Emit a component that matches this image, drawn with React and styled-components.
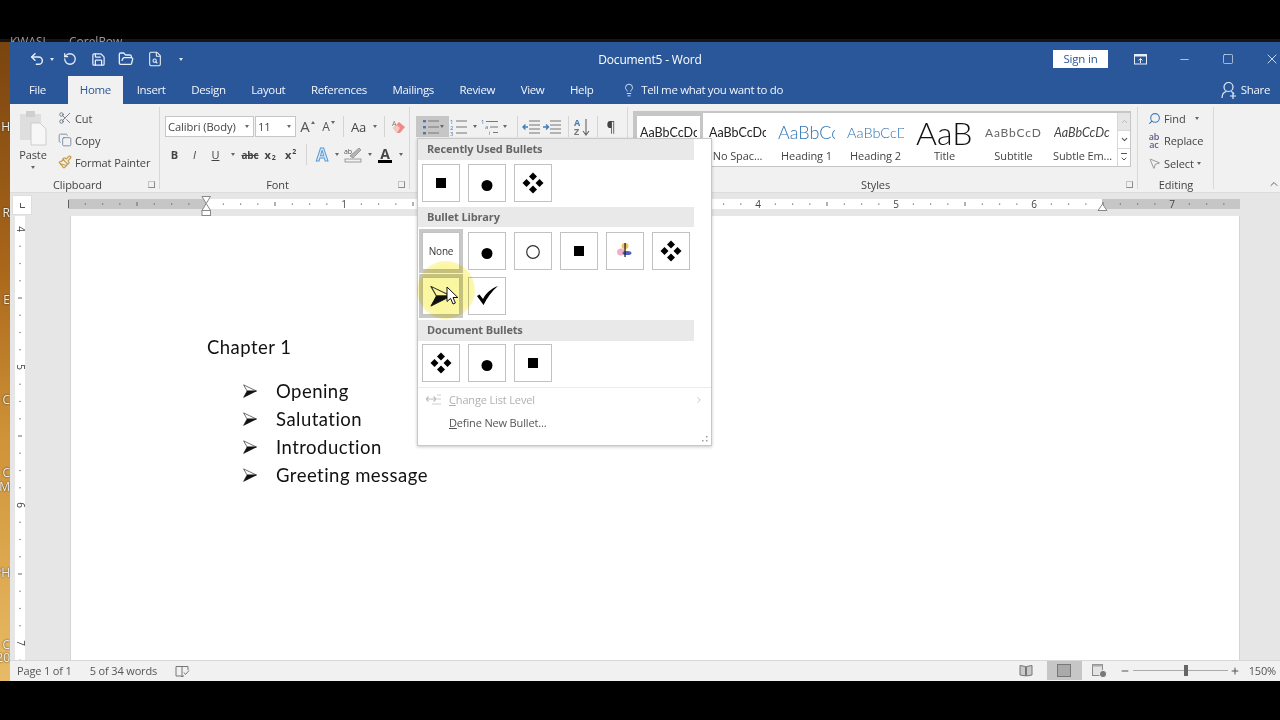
import React from 'react'
import styled, { createGlobalStyle } from 'styled-components'
import {
  Undo2, RotateCcw, Save, FolderOpen, FileSearch, Lightbulb, Minus, Square, X, Scissors, Copy,
  Paintbrush, Search, MousePointer2, Plus, ChevronUp, ChevronDown, ChevronRight,
} from 'lucide-react'

const UI = '"Open Sans", "Noto Sans", sans-serif'
const RANGE = (n) => Array.from({ length: n }, (_, i) => i)

const Global = createGlobalStyle`
  html, body { margin: 0; padding: 0; background: #000; }
  #root { width: 1280px; height: 720px; overflow: hidden; }
`

const Screen = styled.div`
  position: relative;
  width: 1280px;
  height: 720px;
  background: #000;
  font-family: ${UI};
  display: flex;
  flex-direction: column;
  filter: blur(0.5px);
`
const TopStrip = styled.div`
  height: 42px;
  flex: none;
  overflow: hidden;
  display: flex;
  align-items: flex-end;
  gap: 23px;
  padding-left: 10px;
  color: #9a9a9a;
  font-size: 12px;
  line-height: 12px;
  background: linear-gradient(180deg, #000 0 39px, #161616 39px);
  & > span { margin-bottom: -6px; }
`
const Middle = styled.div`
  height: 639px;
  flex: none;
  display: flex;
`
const Desktop = styled.div`
  position: relative;
  width: 10px;
  flex: none;
  overflow: hidden;
  background: linear-gradient(180deg, #7a4410 0%, #a9661a 35%, #cf9338 62%, #e8bb66 100%);
`
const DesktopLabel = styled.span`
  position: absolute;
  right: 0;
  top: ${(p) => p.$top}px;
  color: #f2efe8;
  font-size: 12px;
  line-height: 14px;
  text-shadow: 0 0 2px #222;
`
const Window = styled.div`
  flex: 1;
  display: flex;
  flex-direction: column;
  min-width: 0;
  overflow: hidden;
  background: #f1f1f1;
`

/* title bar */
const TitleBar = styled.div`
  height: 34px;
  flex: none;
  background: #2a579a;
  color: #fff;
  display: flex;
  align-items: center;
  position: relative;
  box-sizing: border-box;
`
const Quick = styled.div`
  display: flex;
  align-items: center;
  padding-left: 17px;
  color: #e6eef8;
`
const QuickBtn = styled.div`
  width: ${(p) => p.$w}px;
  display: flex;
  align-items: center;
  justify-content: center;
  flex: none;
`
const WhiteCaret = styled.i`
  width: 0;
  height: 0;
  border-left: 2.5px solid transparent;
  border-right: 2.5px solid transparent;
  border-top: 3px solid #dfe8f5;
`
const DocTitle = styled.div`
  position: absolute;
  left: 0;
  right: 0;
  top: 0;
  bottom: 0;
  display: flex;
  align-items: center;
  justify-content: center;
  font-size: 12px;
  letter-spacing: -0.15px;
  transform: translateX(5px);
  pointer-events: none;
`
const WinControls = styled.div`
  margin-left: auto;
  margin-right: -14px;
  display: flex;
  align-items: center;
  position: relative;
`
const SignIn = styled.div`
  width: 55px;
  height: 18px;
  background: #fff;
  color: #2a579a;
  font-size: 11.5px;
  letter-spacing: -0.2px;
  line-height: 18px;
  text-align: center;
  margin-right: 10px;
`
const WinBtn = styled.div`
  width: 44px;
  display: flex;
  justify-content: center;
  align-items: center;
  color: #e6eef8;
`

/* tabs */
const TabBar = styled.div`
  height: 28px;
  flex: none;
  background: #2a579a;
  display: flex;
  align-items: stretch;
  font-size: 11.5px;
  letter-spacing: -0.35px;
  color: #f2f5fa;
`
const Tab = styled.div`
  display: flex;
  align-items: center;
  padding: 0 12.8px 1px;
  ${(p) => p.$active && 'background: #f1f1f1; color: #2a579a; margin: 0 1px 0 13px; padding: 0 12px 1px;'}
  ${(p) => p.$first && 'padding: 0 9px 1px 19px;'}
`
const TellMe = styled.div`
  display: flex;
  align-items: center;
  gap: 5px;
  padding: 0 0 1px 16px;
`
const Share = styled.div`
  margin-left: auto;
  display: flex;
  align-items: center;
  gap: 4px;
  padding: 0 10px 1px 0;
`

/* ribbon */
const Ribbon = styled.div`
  height: 89px;
  flex: none;
  display: flex;
  background: #f1f1f1;
  border-bottom: 1px solid #dcdcdc;
  box-sizing: border-box;
  color: #444;
  font-size: 11px;
  letter-spacing: -0.1px;
`
const Group = styled.div`
  width: ${(p) => p.$w}px;
  flex: none;
  box-sizing: border-box;
  display: flex;
  flex-direction: column;
  position: relative;
  &::after {
    content: '';
    position: absolute;
    right: 0;
    top: 3px;
    bottom: 3px;
    width: 1px;
    background: #d8d8d8;
  }
`
const GroupBody = styled.div`
  flex: 1;
  min-height: 0;
  display: flex;
  padding-left: ${(p) => p.$pl || 0}px;
`
const GroupLabel = styled.div`
  height: 18px;
  margin-bottom: -1px;
  display: grid;
  grid-template-columns: 1fr auto 1fr;
  align-items: center;
  padding-right: ${(p) => (p.$center ? 0 : 15)}px;
  font-size: 11px;
  color: #444;
  & > span { grid-column: 2; }
`
const Launcher = styled.i`
  grid-column: 3;
  justify-self: end;
  margin-right: -10px;
  width: 5px;
  height: 5px;
  border: 1px solid #8a8a8a;
  border-top-color: #c4c4c4;
  border-left-color: #c4c4c4;
  display: block;
`

const PasteCol = styled.div`
  width: 46px;
  display: flex;
  flex-direction: column;
  align-items: center;
  padding-top: 6px;
  flex: none;
`
const PasteLabel = styled.div`
  margin: 1px 0 4px;
  font-size: 11px;
  line-height: 15px;
`
const ClipList = styled.div`
  display: flex;
  flex-direction: column;
  padding: 3px 0 0 2px;
`
const ClipItem = styled.div`
  height: 22px;
  display: flex;
  align-items: center;
  gap: 3px;
  white-space: nowrap;
`

const Rows = styled.div`
  display: flex;
  flex-direction: column;
  gap: 7px;
  padding-top: 12px;
`
const Row = styled.div`
  display: flex;
  align-items: center;
  height: 21px;
`
const Combo = styled.div`
  width: ${(p) => p.$w}px;
  height: 21px;
  box-sizing: border-box;
  margin-right: 1px;
  background: #fff;
  border: 1px solid #c6c6c6;
  display: flex;
  align-items: center;
  justify-content: space-between;
  padding: 0 4px 0 2px;
  font-size: 11.2px;
`
const Cell = styled.div`
  width: ${(p) => p.$w}px;
  height: 21px;
  flex: none;
  display: flex;
  align-items: center;
  justify-content: center;
  position: relative;
  color: #444;
  font-size: ${(p) => p.$size || 11}px;
  font-weight: ${(p) => (p.$bold ? 700 : 400)};
  font-style: ${(p) => (p.$italic ? 'italic' : 'normal')};
  ${(p) => p.$under && 'text-decoration: underline;'}
  ${(p) => p.$strike && 'text-decoration: line-through;'}
  ${(p) => p.$on && 'background: #c6c6c6;'}
`
const Caret = styled.i`
  width: 0;
  height: 0;
  border-left: 2.5px solid transparent;
  border-right: 2.5px solid transparent;
  border-top: 3px solid #666;
  display: block;
  flex: none;
`
const Nudge = styled.i`
  width: 0;
  height: 0;
  margin: -8px 0 0 1px;
  border-left: 2px solid transparent;
  border-right: 2px solid transparent;
  ${(p) => (p.$up ? 'border-bottom: 3px solid #666;' : 'border-top: 3px solid #666;')}
`
const VLine = styled.i`
  width: 1px;
  height: 21px;
  flex: none;
  background: #d4d4d4;
  margin: 0 ${(p) => p.$r}px 0 ${(p) => p.$l}px;
`
const Sup = styled.span`
  font-size: 7px;
  position: relative;
  top: ${(p) => p.$top}px;
  margin-left: 1px;
`
const BigA = styled.span`
  font-size: ${(p) => p.$size}px;
  color: #555;
  line-height: 1;
`
const GlowA = styled.span`
  font-size: 17px;
  font-weight: 700;
  line-height: 1;
  color: #dce9f8;
  -webkit-text-stroke: 1px #5b9bd5;
`
const ColorA = styled.span`
  font-size: 14px;
  font-weight: 700;
  line-height: 13px;
  color: #444;
  border-bottom: 3px solid #000;
  padding: 0 2px;
`

/* styles gallery */
const Gallery = styled.div`
  display: flex;
  margin: 7px 0 0 5px;
  height: 56px;
  width: 498px;
  box-sizing: border-box;
  background: #fff;
  border: 1px solid #c6c6c6;
  border-top-width: 2px;
`
const StyleItem = styled.div`
  width: 69px;
  flex: none;
  box-sizing: border-box;
  display: flex;
  flex-direction: column;
  align-items: center;
  ${(p) => p.$on && 'box-shadow: inset 0 0 0 3px #c6c6c6;'}
`
const Preview = styled.div`
  height: 35px;
  width: 57px;
  box-sizing: border-box;
  padding-top: 3px;
  overflow: hidden;
  display: flex;
  align-items: center;
  white-space: nowrap;
  font-family: Lato, sans-serif;
  color: ${(p) => p.$color || '#222'};
  font-size: ${(p) => p.$size || 12.5}px;
  font-style: ${(p) => (p.$italic ? 'italic' : 'normal')};
  font-weight: ${(p) => p.$weight || 400};
  letter-spacing: ${(p) => p.$track || 0}px;
`
const StyleName = styled.div`
  font-size: 11px;
  line-height: 15px;
  color: #444;
  white-space: nowrap;
`
const GalleryScroll = styled.div`
  width: 14px;
  margin-left: auto;
  display: flex;
  flex-direction: column;
  border-left: 1px solid #d8d8d8;
`
const ScrollBtn = styled.div`
  flex: 1;
  display: flex;
  flex-direction: column;
  align-items: center;
  justify-content: center;
  gap: 1px;
  color: #555;
  background: ${(p) => (p.$off ? '#e6e6e6' : '#fff')};
  & + & { border-top: 1px solid #d8d8d8; }
`
const Bar = styled.i`
  width: 6px;
  height: 1px;
  background: #555;
  display: block;
`
const EditList = styled.div`
  display: flex;
  flex-direction: column;
  padding: 3px 0 0 9px;
`
const EditItem = styled.div`
  height: 22.5px;
  display: flex;
  align-items: center;
  gap: 3px;
  white-space: nowrap;
  & > i { margin-left: ${(p) => p.$gap || 0}px; }
`
const IconBox = styled.span`
  width: 14px;
  display: inline-flex;
  justify-content: center;
  flex: none;
`
const AbAc = styled.span`
  width: 14px;
  font-size: 9px;
  line-height: 7.5px;
  font-weight: 600;
  color: #5c5c8a;
  text-align: center;
`
const Collapse = styled.div`
  flex: 1;
  display: flex;
  justify-content: flex-end;
  align-items: flex-end;
  padding: 0 0 2px;
  color: #666;
`

/* rulers and page */
const RulerRow = styled.div`
  height: 23px;
  flex: none;
  display: flex;
  background: #e6e6e6;
`
const TabStop = styled.div`
  width: 18px;
  height: 18px;
  margin: 3px 37px 0 3px;
  background: #fff;
  box-shadow: 0 0 0 1px #dedede;
  flex: none;
  display: flex;
  align-items: center;
  justify-content: center;
  &::before {
    content: '';
    width: 4px;
    height: 4px;
    border-left: 1.5px solid #555;
    border-bottom: 1.5px solid #555;
  }
`
const RulerSvg = styled.svg`
  display: block;
  flex: none;
`
const RulerText = styled.text`
  font-family: ${UI};
  font-size: 10px;
  fill: #444;
  text-anchor: middle;
`
const Work = styled.div`
  flex: 1;
  min-height: 0;
  display: flex;
  background: #e6e6e6;
  overflow: hidden;
`
const VRulerWrap = styled.div`
  margin-left: 5px;
  width: 10px;
  margin-right: 44.5px;
  flex: none;
  background: #fff;
`
const Page = styled.div`
  width: 1170px;
  flex: none;
  box-sizing: border-box;
  background: #fff;
  border-left: 1px solid #d4d4d4;
  border-right: 1px solid #d4d4d4;
  padding: 117px 0 0 136.5px;
  font-family: Lato, "Liberation Sans", sans-serif;
  font-size: 18.5px;
  line-height: 28px;
  color: #111;
  letter-spacing: 0.47px;
`
const Chapter = styled.div`
  margin-bottom: 16px;
`
const List = styled.ul`
  list-style: none;
  margin: 0;
  padding: 0 0 0 36px;
`
const Item = styled.li`
  display: flex;
  align-items: center;
  gap: 19px;
`

/* bullets menu */
const Menu = styled.div`
  position: absolute;
  left: 417px;
  top: 138px;
  width: 295px;
  height: 308px;
  box-sizing: border-box;
  background: #fff;
  border: 1px solid #c8c8c8;
  box-shadow: 0 1px 3px rgba(0, 0, 0, 0.22);
  color: #444;
  letter-spacing: -0.15px;
`
const MenuHead = styled.div`
  width: 276px;
  height: ${(p) => p.$h}px;
  box-sizing: border-box;
  padding: 0 0 2px 9px;
  background: #e9e9e9;
  font-size: 11px;
  font-weight: 700;
  color: #666;
  display: flex;
  align-items: center;
`
const Tiles = styled.div`
  display: grid;
  grid-template-columns: repeat(6, 38px);
  column-gap: 8px;
  row-gap: 7px;
  padding: ${(p) => p.$t}px 0 ${(p) => p.$b}px 4px;
`
const TileBox = styled.div`
  width: 38px;
  height: 38px;
  box-sizing: border-box;
  border: 1px solid #c2c2c2;
  background: #fff;
  display: flex;
  align-items: center;
  justify-content: center;
  font-size: 10px;
  color: #333;
  ${(p) => p.$on && 'box-shadow: 0 0 0 3px #c8c8c8;'}
`
const MenuLine = styled.div`
  height: 1px;
  background: #ebebeb;
  margin-top: 5px;
`
const MenuItem = styled.div`
  height: 23px;
  display: flex;
  align-items: center;
  padding: 0 10px 0 7px;
  font-size: 11px;
  color: ${(p) => (p.$off ? '#b0b0b0' : '#555')};
`
const MenuIcon = styled.span`
  width: 17px;
  margin-right: 7px;
  display: inline-flex;
  justify-content: center;
`
const Key = styled.span`
  text-decoration: underline;
`
const Chevron = styled.span`
  margin-left: auto;
  margin-right: -3px;
  display: inline-flex;
  color: #bbb;
`
const Grip = styled.svg`
  position: absolute;
  right: 2px;
  bottom: 2px;
`
const Glow = styled.div`
  position: absolute;
  left: -1px;
  top: 122px;
  width: 58px;
  height: 58px;
  border-radius: 50%;
  mix-blend-mode: multiply;
  background: radial-gradient(circle, #fbf6a0 0 55%, #fdf9c4 80%, #ffffff 100%);
`
const Pointer = styled.svg`
  position: absolute;
  left: 28px;
  top: 147px;
`

/* status bar */
const Status = styled.div`
  height: 21px;
  flex: none;
  display: flex;
  align-items: center;
  background: #f1f1f1;
  border-top: 1px solid #d8d8d8;
  box-sizing: border-box;
  font-size: 11px;
  letter-spacing: -0.15px;
  color: #555;
  padding: 0 0 1px 7px;
`
const StatusText = styled.span`
  margin-right: ${(p) => p.$mr || 0}px;
  margin-left: ${(p) => p.$ml || 0}px;
  white-space: nowrap;
`
const StatusRight = styled.div`
  margin-left: auto;
  display: flex;
  align-items: center;
  height: 100%;
  padding-right: 4px;
`
const ViewBtn = styled.div`
  width: 35px;
  height: 100%;
  display: flex;
  align-items: center;
  justify-content: center;
  margin-right: ${(p) => p.$mr || 0}px;
  ${(p) => p.$on && 'background: #c6c6c6;'}
`
const Zoom = styled.div`
  width: 95px;
  height: 1px;
  background: #aaa;
  margin: 0 2px 0 3px;
  position: relative;
  &::after {
    content: '';
    position: absolute;
    left: 51px;
    top: -5px;
    width: 4px;
    height: 11px;
    background: #666;
  }
`

/* drawn icons */
const Svg = ({ w = 16, h = 16, children }) => (
  <svg width={w} height={h} viewBox={`0 0 ${w} ${h}`} fill="none">{children}</svg>
)

const Diamonds = () => (
  <g fill="#000">
    {[[18, 11.5], [11.5, 18], [24.5, 18], [18, 24.5]].map(([x, y]) => (
      <path key={`${x}-${y}`} d={`M${x} ${y - 4}L${x + 4} ${y}L${x} ${y + 4}L${x - 4} ${y}Z`} />
    ))}
  </g>
)

const Arrow = ({ size }) => (
  <svg width={size} height={size} viewBox="0 0 24 24" fill="none">
    <path d="M1 1.5L23 12L7 12Z" fill="#fff" stroke="#333" strokeWidth="1.2" strokeLinejoin="round" />
    <path d="M7 12L23 12L1 23Z" fill="#111" stroke="#111" strokeWidth="1" strokeLinejoin="round" />
  </svg>
)

const Glyph = ({ kind }) => {
  if (kind === 'none') return 'None'
  if (kind === 'arrow') return <Arrow size={22} />
  return (
    <svg width="36" height="36" viewBox="0 0 36 36">
      {kind === 'square' && <rect x="13" y="13" width="10" height="10" fill="#000" />}
      {kind === 'dot' && <circle cx="18" cy="20.5" r="5.5" fill="#000" />}
      {kind === 'ring' && <circle cx="18" cy="19" r="6.3" fill="#fff" stroke="#333" strokeWidth="1.2" />}
      {kind === 'diamonds' && <Diamonds />}
      {kind === 'multi' && (
        <g>
          <ellipse cx="14" cy="19" rx="4" ry="3.5" fill="#eeb0c4" />
          <ellipse cx="18" cy="13" rx="3.5" ry="3" fill="#f4c060" />
          <ellipse cx="20" cy="20" rx="4.5" ry="2" fill="#4f5fc0" />
          <rect x="17.4" y="10" width="1.3" height="14" fill="#222" />
        </g>
      )}
      {kind === 'check' && (
        <path d="M8 18L10.5 16.5L14 21C17 15 22 10.5 29 8C23 13 18 20 14.5 27Z" fill="#000" />
      )}
    </svg>
  )
}

const Tile = ({ kind, on }) => (
  <TileBox $on={on}>
    <Glyph kind={kind} />
  </TileBox>
)

const PasteIcon = () => (
  <Svg w={28} h={36}>
    <rect x="1" y="4" width="21" height="26" fill="#dedede" />
    <rect x="7" y="1" width="9" height="6" fill="#cfcfcf" />
    <path d="M12 13H21L27 19V35H12Z" fill="#f7f7f7" stroke="#cdcdcd" />
  </Svg>
)

const ListLines = ({ nums }) => (
  <>
    {[3, 9, 15].map((y, i) => (
      <g key={y}>
        {nums
          ? <text x="0" y={y + 2.5} fontSize="6" fill="#4a7ab5">{i + 1}</text>
          : <rect x="1" y={y - 1} width="3" height="2.4" fill="#4a7ab5" />}
        <rect x="6" y={y - 0.5} width="11" height="1" fill="#777" />
      </g>
    ))}
  </>
)

const BulletsIcon = () => <Svg w={18} h={18}><ListLines /></Svg>
const NumbersIcon = () => <Svg w={18} h={18}><ListLines nums /></Svg>
const MultiIcon = () => (
  <Svg w={18} h={18}>
    <text x="0" y="6" fontSize="6" fill="#4a7ab5">1</text>
    <rect x="5" y="3" width="12" height="1" fill="#777" />
    <text x="4" y="11" fontSize="6" fill="#4a7ab5">a</text>
    <rect x="9" y="8.5" width="8" height="1" fill="#777" />
    <text x="8" y="17" fontSize="6" fill="#4a7ab5">i</text>
    <rect x="12" y="14" width="5" height="1" fill="#777" />
  </Svg>
)
const IndentIcon = ({ flip }) => (
  <Svg w={18} h={14}>
    {[1, 5, 9, 13].map((y) => <rect key={y} x="7" y={y - 0.5} width="11" height="1" fill="#777" />)}
    <path d={flip ? 'M0 7H5M3 4.5L5.5 7L3 9.5' : 'M6 7H1M3.5 4.5L1 7L3.5 9.5'} stroke="#3f7cc0" strokeWidth="1.4" />
  </Svg>
)
const LevelIcon = () => (
  <Svg w={16} h={12}>
    <path d="M0 5H10M2.5 2.5L0 5L2.5 7.5M7.5 2.5L10 5L7.5 7.5" stroke="#bdbdbd" strokeWidth="1.2" />
    <path d="M11 1H15M11 5H15M6 10H15" stroke="#cfcfcf" />
  </Svg>
)
const SortIcon = () => (
  <Svg w={18} h={20}>
    <text x="1" y="9" fontSize="9" fontWeight="700" fill="#4a7ab5">A</text>
    <text x="1" y="18" fontSize="9" fontWeight="700" fill="#777">Z</text>
    <path d="M13 2V17M10 14L13 18L16 14" stroke="#666" strokeWidth="1.1" />
  </Svg>
)
const EraserIcon = () => (
  <Svg w={16} h={16}>
    <path d="M2 9L8 3L14 8L9 14H6Z" fill="#f08a8a" />
    <path d="M2 9L5 5L9 9L6 14Z" fill="#f6c9c0" />
    <text x="1" y="7" fontSize="7" fill="#777">A</text>
  </Svg>
)
const HighlightIcon = () => (
  <Svg w={19} h={16}>
    <text x="0" y="7" fontSize="7" fill="#555">ab</text>
    <path d="M6 9L15 1L17 3L9 11Z" fill="#b4b4b4" stroke="#777" strokeWidth="0.6" />
    <rect x="1" y="12" width="16" height="3" fill="#f1f1f1" stroke="#888" strokeWidth="0.8" />
  </Svg>
)
const CopyIcon = () => <Copy size={14} color="#6d7f94" strokeWidth={1.4} />

const Ribbonshow = () => (
  <Svg w={13} h={12}>
    <rect x="0.5" y="1.5" width="12" height="9.5" stroke="#e6eef8" />
    <rect x="0.5" y="1.5" width="12" height="2" fill="#e6eef8" />
    <path d="M6.5 10V5.5M4.5 7.5L6.5 5.5L8.5 7.5" stroke="#e6eef8" />
  </Svg>
)
const SharePerson = () => (
  <Svg w={16} h={18}>
    <circle cx="7.5" cy="6" r="4.5" stroke="#e6eef8" strokeWidth="1.2" />
    <path d="M1 17C1 13 3 11 5.5 10.5M10 10.5C11.5 11 12.5 12 13 13" stroke="#e6eef8" strokeWidth="1.2" />
    <path d="M9 15H15M12 12V18" stroke="#e6eef8" strokeWidth="1.2" />
  </Svg>
)
const ProofIcon = () => (
  <Svg w={16} h={14}>
    <path d="M8 2.5H2V12H7.5L8 13L8.5 12H10M8 2.5V13M8 2.5H14V6" stroke="#777" />
    <path d="M10 8.5L11.5 10.5L15 6.5" stroke="#777" />
  </Svg>
)
const ReadIcon = () => (
  <Svg w={14} h={13}>
    <path d="M1 1.5L6.5 2.5V12L1 11Z" fill="#c9c9c9" stroke="#777" />
    <path d="M13 1.5L7.5 2.5V12L13 11Z" fill="#c9c9c9" stroke="#777" />
  </Svg>
)
const PrintIcon = () => (
  <Svg w={14} h={13}>
    <rect x="0.5" y="0.5" width="13" height="12" fill="#aaa" stroke="#777" />
  </Svg>
)
const WebIcon = () => (
  <Svg w={15} h={14}>
    <rect x="0.5" y="0.5" width="10" height="11" fill="#e4e4e4" stroke="#888" />
    <rect x="0.5" y="0.5" width="10" height="2" fill="#aaa" />
    <circle cx="11" cy="10" r="3.6" fill="#777" stroke="#f1f1f1" />
  </Svg>
)
const CursorIcon = () => (
  <Pointer width="13" height="20" viewBox="0 0 13 20">
    <path d="M1 1V15.5L4.6 12.4L7 18L9.4 17L7 11.5H11.8Z" fill="#fff" stroke="#111" strokeWidth="1" strokeLinejoin="round" />
  </Pointer>
)

const HRuler = () => (
  <RulerSvg width="1172" height="23" viewBox="0 0 1172 23">
    <rect x="0" y="6" width="1172" height="10" fill="#c6c6c6" />
    <rect x="138" y="6" width="896" height="10" fill="#fff" />
    {RANGE(68).map((i) => {
      const x = i * 17.25
      if (i % 8 === 0) return null
      return i % 4 === 0
        ? <rect key={i} x={x - 0.5} y="9" width="1" height="4" fill="#666" />
        : <rect key={i} x={x - 0.5} y="10.5" width="1.2" height="1.2" fill="#666" />
    })}
    {[[1, 0], [1, 276], [2, 414], [3, 552], [4, 690], [5, 828], [6, 966], [7, 1104]].map(([n, x]) => (
      <RulerText key={x} x={x} y="15">{n}</RulerText>
    ))}
    <path d="M134 3.5H142.5L138.2 10.5L142.5 17.5H134L138.2 10.5Z" fill="#fff" stroke="#888" />
    <rect x="134" y="17.5" width="8.5" height="5" fill="#fff" stroke="#888" />
    <path d="M1034.5 11L1039 17.5H1030Z" fill="#fff" stroke="#888" />
  </RulerSvg>
)

const VRuler = () => (
  <RulerSvg width="10" height="444" viewBox="0 0 10 444">
    {RANGE(27).map((i) => {
      const y = 13 + i * 17.25
      if (i % 8 === 0) return <RulerText key={i} transform={`translate(1.5 ${y}) rotate(90)`}>{4 + i / 8}</RulerText>
      return i % 4 === 0
        ? <rect key={i} x="3" y={y - 0.5} width="4" height="1" fill="#666" />
        : <rect key={i} x="4.4" y={y - 0.6} width="1.2" height="1.2" fill="#666" />
    })}
  </RulerSvg>
)

const STYLE_ITEMS = [
  { name: 'No Spac...', label: 'AaBbCcDc' },
  { name: 'Heading 1', label: 'AaBbCc', size: 18, color: '#2e74b5', weight: 300 },
  { name: 'Heading 2', label: 'AaBbCcD', size: 14.5, color: '#2e74b5', weight: 300 },
  { name: 'Title', label: 'AaB', size: 32, color: '#111', weight: 300 },
  { name: 'Subtitle', label: 'AaBbCcD', size: 12, color: '#666', track: 0.8 },
  { name: 'Subtle Em...', label: 'AaBbCcDc', color: '#444', italic: true },
]

const App = () => (
  <Screen>
    <Global />
    <TopStrip>
      <span>KWASI</span>
      <span>CorelRow</span>
    </TopStrip>
    <Middle>
      <Desktop>
        {[['H', 78], ['R', 164], ['E', 251], ['C', 351], ['C', 424], ['M', 438], ['PH', 524], ['C', 596], ['20', 609]].map(([t, top]) => (
          <DesktopLabel key={`${t}${top}`} $top={top}>{t}</DesktopLabel>
        ))}
      </Desktop>
      <Window>
        <TitleBar>
          <Quick>
            <QuickBtn $w={20}><Undo2 size={16} strokeWidth={2.2} /></QuickBtn>
            <QuickBtn $w={10}><WhiteCaret /></QuickBtn>
            <QuickBtn $w={26}><RotateCcw size={14} strokeWidth={2.2} /></QuickBtn>
            <QuickBtn $w={30}><Save size={15} strokeWidth={2} /></QuickBtn>
            <QuickBtn $w={26}><FolderOpen size={16} strokeWidth={2} /></QuickBtn>
            <QuickBtn $w={32}><FileSearch size={16} strokeWidth={1.6} /></QuickBtn>
            <QuickBtn $w={20}><WhiteCaret /></QuickBtn>
          </Quick>
          <DocTitle>Document5 - Word</DocTitle>
          <WinControls>
            <SignIn>Sign in</SignIn>
            <WinBtn><Ribbonshow /></WinBtn>
            <WinBtn><Minus size={13} strokeWidth={1.3} /></WinBtn>
            <WinBtn><Square size={12} strokeWidth={1.3} /></WinBtn>
            <WinBtn><X size={16} strokeWidth={1.3} /></WinBtn>
          </WinControls>
        </TitleBar>
        <TabBar>
          <Tab $first>File</Tab>
          <Tab $active>Home</Tab>
          <Tab>Insert</Tab>
          <Tab>Design</Tab>
          <Tab>Layout</Tab>
          <Tab>References</Tab>
          <Tab>Mailings</Tab>
          <Tab>Review</Tab>
          <Tab>View</Tab>
          <Tab>Help</Tab>
          <TellMe>
            <Lightbulb size={14} strokeWidth={1.4} />
            Tell me what you want to do
          </TellMe>
          <Share>
            <SharePerson />
            Share
          </Share>
        </TabBar>
        <Ribbon>
          <Group $w={150}>
            <GroupBody>
              <PasteCol>
                <PasteIcon />
                <PasteLabel>Paste</PasteLabel>
                <Caret />
              </PasteCol>
              <ClipList>
                <ClipItem><Scissors size={14} color="#5c6b7c" strokeWidth={1.4} />Cut</ClipItem>
                <ClipItem><CopyIcon />Copy</ClipItem>
                <ClipItem><Paintbrush size={14} color="#c59a45" strokeWidth={2} />Format Painter</ClipItem>
              </ClipList>
            </GroupBody>
            <GroupLabel><span>Clipboard</span><Launcher /></GroupLabel>
          </Group>
          <Group $w={250}>
            <GroupBody $pl={5}>
              <Rows>
                <Row>
                  <Combo $w={89}>Calibri (Body)<Caret /></Combo>
                  <Combo $w={41}>11<Caret /></Combo>
                  <Cell $w={21}><BigA $size={15}>A</BigA><Nudge $up /></Cell>
                  <Cell $w={21}><BigA $size={12}>A</BigA><Nudge /></Cell>
                  <VLine $l={4} $r={3} />
                  <Cell $w={23} $size={13}>Aa</Cell>
                  <Cell $w={10}><Caret /></Cell>
                  <VLine $l={4} $r={3} />
                  <Cell $w={22}><EraserIcon /></Cell>
                </Row>
                <Row>
                  <Cell $w={19} $bold>B</Cell>
                  <Cell $w={21} $italic>I</Cell>
                  <Cell $w={21} $under>U</Cell>
                  <Cell $w={14}><Caret /></Cell>
                  <Cell $w={20} $strike $bold $size={10}>abc</Cell>
                  <Cell $w={20} $bold>x<Sup $top={3}>2</Sup></Cell>
                  <Cell $w={21} $bold>x<Sup $top={-3}>2</Sup></Cell>
                  <VLine $l={5} $r={5} />
                  <Cell $w={20}><GlowA>A</GlowA></Cell>
                  <Cell $w={9}><Caret /></Cell>
                  <Cell $w={24}><HighlightIcon /></Cell>
                  <Cell $w={9}><Caret /></Cell>
                  <Cell $w={22}><ColorA>A</ColorA></Cell>
                  <Cell $w={9}><Caret /></Cell>
                </Row>
              </Rows>
            </GroupBody>
            <GroupLabel><span>Font</span><Launcher /></GroupLabel>
          </Group>
          <Group $w={218}>
            <GroupBody $pl={6}>
              <Rows>
                <Row>
                  <Cell $w={33} $on><BulletsIcon /><Caret /></Cell>
                  <Cell $w={19}><NumbersIcon /></Cell>
                  <Cell $w={13}><Caret /></Cell>
                  <Cell $w={18}><MultiIcon /></Cell>
                  <Cell $w={12}><Caret /></Cell>
                  <VLine $l={6} $r={3} />
                  <Cell $w={20}><IndentIcon /></Cell>
                  <Cell $w={21}><IndentIcon flip /></Cell>
                  <VLine $l={6} $r={3} />
                  <Cell $w={20}><SortIcon /></Cell>
                  <VLine $l={5} $r={3} />
                  <Cell $w={20} $size={14}>¶</Cell>
                </Row>
              </Rows>
            </GroupBody>
            <GroupLabel><span>Paragraph</span></GroupLabel>
          </Group>
          <Group $w={510}>
            <GroupBody>
              <Gallery>
                <StyleItem $on>
                  <Preview>AaBbCcDc</Preview>
                  <StyleName>Normal</StyleName>
                </StyleItem>
                {STYLE_ITEMS.map((s) => (
                  <StyleItem key={s.name}>
                    <Preview $size={s.size} $color={s.color} $weight={s.weight} $italic={s.italic} $track={s.track}>{s.label}</Preview>
                    <StyleName>{s.name}</StyleName>
                  </StyleItem>
                ))}
                <GalleryScroll>
                  <ScrollBtn $off><ChevronUp size={9} strokeWidth={2} color="#aaa" /></ScrollBtn>
                  <ScrollBtn><ChevronDown size={9} strokeWidth={3} /></ScrollBtn>
                  <ScrollBtn><Bar /><ChevronDown size={8} strokeWidth={3} /></ScrollBtn>
                </GalleryScroll>
              </Gallery>
            </GroupBody>
            <GroupLabel><span>Styles</span><Launcher /></GroupLabel>
          </Group>
          <Group $w={76}>
            <GroupBody>
              <EditList>
                <EditItem $gap={6}><IconBox><Search size={13} color="#3f7cc0" strokeWidth={2} transform="scale(-1 1)" /></IconBox>Find<Caret /></EditItem>
                <EditItem><AbAc>ab<br />ac</AbAc>Replace</EditItem>
                <EditItem><IconBox><MousePointer2 size={13} color="#777" strokeWidth={1.3} /></IconBox>Select<Caret /></EditItem>
              </EditList>
            </GroupBody>
            <GroupLabel $center><span>Editing</span></GroupLabel>
          </Group>
          <Collapse><ChevronUp size={12} /></Collapse>
        </Ribbon>
        <RulerRow>
          <TabStop />
          <HRuler />
        </RulerRow>
        <Work>
          <VRulerWrap><VRuler /></VRulerWrap>
          <Page>
            <Chapter>Chapter 1</Chapter>
            <List>
              {['Opening', 'Salutation', 'Introduction', 'Greeting message'].map((t) => (
                <Item key={t}><Arrow size={14} />{t}</Item>
              ))}
            </List>
          </Page>
        </Work>
        <Status>
          <StatusText $mr={18}>Page 1 of 1</StatusText>
          <StatusText $mr={17}>5 of 34 words</StatusText>
          <ProofIcon />
          <StatusRight>
            <ViewBtn $mr={3}><ReadIcon /></ViewBtn>
            <ViewBtn $on><PrintIcon /></ViewBtn>
            <ViewBtn $mr={3}><WebIcon /></ViewBtn>
            <Minus size={10} color="#555" strokeWidth={2.5} />
            <Zoom />
            <Plus size={10} color="#555" strokeWidth={2.5} />
            <StatusText $ml={9}>150%</StatusText>
          </StatusRight>
        </Status>
      </Window>
    </Middle>
    <Menu>
      <MenuHead $h={21}>Recently Used Bullets</MenuHead>
      <Tiles $t={4} $b={5}>
        <Tile kind="square" />
        <Tile kind="dot" />
        <Tile kind="diamonds" />
      </Tiles>
      <MenuHead $h={20}>Bullet Library</MenuHead>
      <Tiles $t={5} $b={5}>
        <Tile kind="none" on />
        <Tile kind="dot" />
        <Tile kind="ring" />
        <Tile kind="square" />
        <Tile kind="multi" />
        <Tile kind="diamonds" />
        <Tile kind="arrow" on />
        <Tile kind="check" />
      </Tiles>
      <MenuHead $h={21}>Document Bullets</MenuHead>
      <Tiles $t={3} $b={0}>
        <Tile kind="diamonds" />
        <Tile kind="dot" />
        <Tile kind="square" />
      </Tiles>
      <MenuLine />
      <MenuItem $off>
        <MenuIcon><LevelIcon /></MenuIcon>
        <span><Key>C</Key>hange List Level</span>
        <Chevron><ChevronRight size={10} /></Chevron>
      </MenuItem>
      <MenuItem>
        <MenuIcon />
        <span><Key>D</Key>efine New Bullet...</span>
      </MenuItem>
      <Grip width="8" height="8" viewBox="0 0 8 8">
        <rect x="5" y="1" width="1.5" height="1.5" fill="#999" />
        <rect x="5" y="5" width="1.5" height="1.5" fill="#999" />
        <rect x="1" y="5" width="1.5" height="1.5" fill="#999" />
      </Grip>
      <Glow />
      <CursorIcon />
    </Menu>
  </Screen>
)

export default App
